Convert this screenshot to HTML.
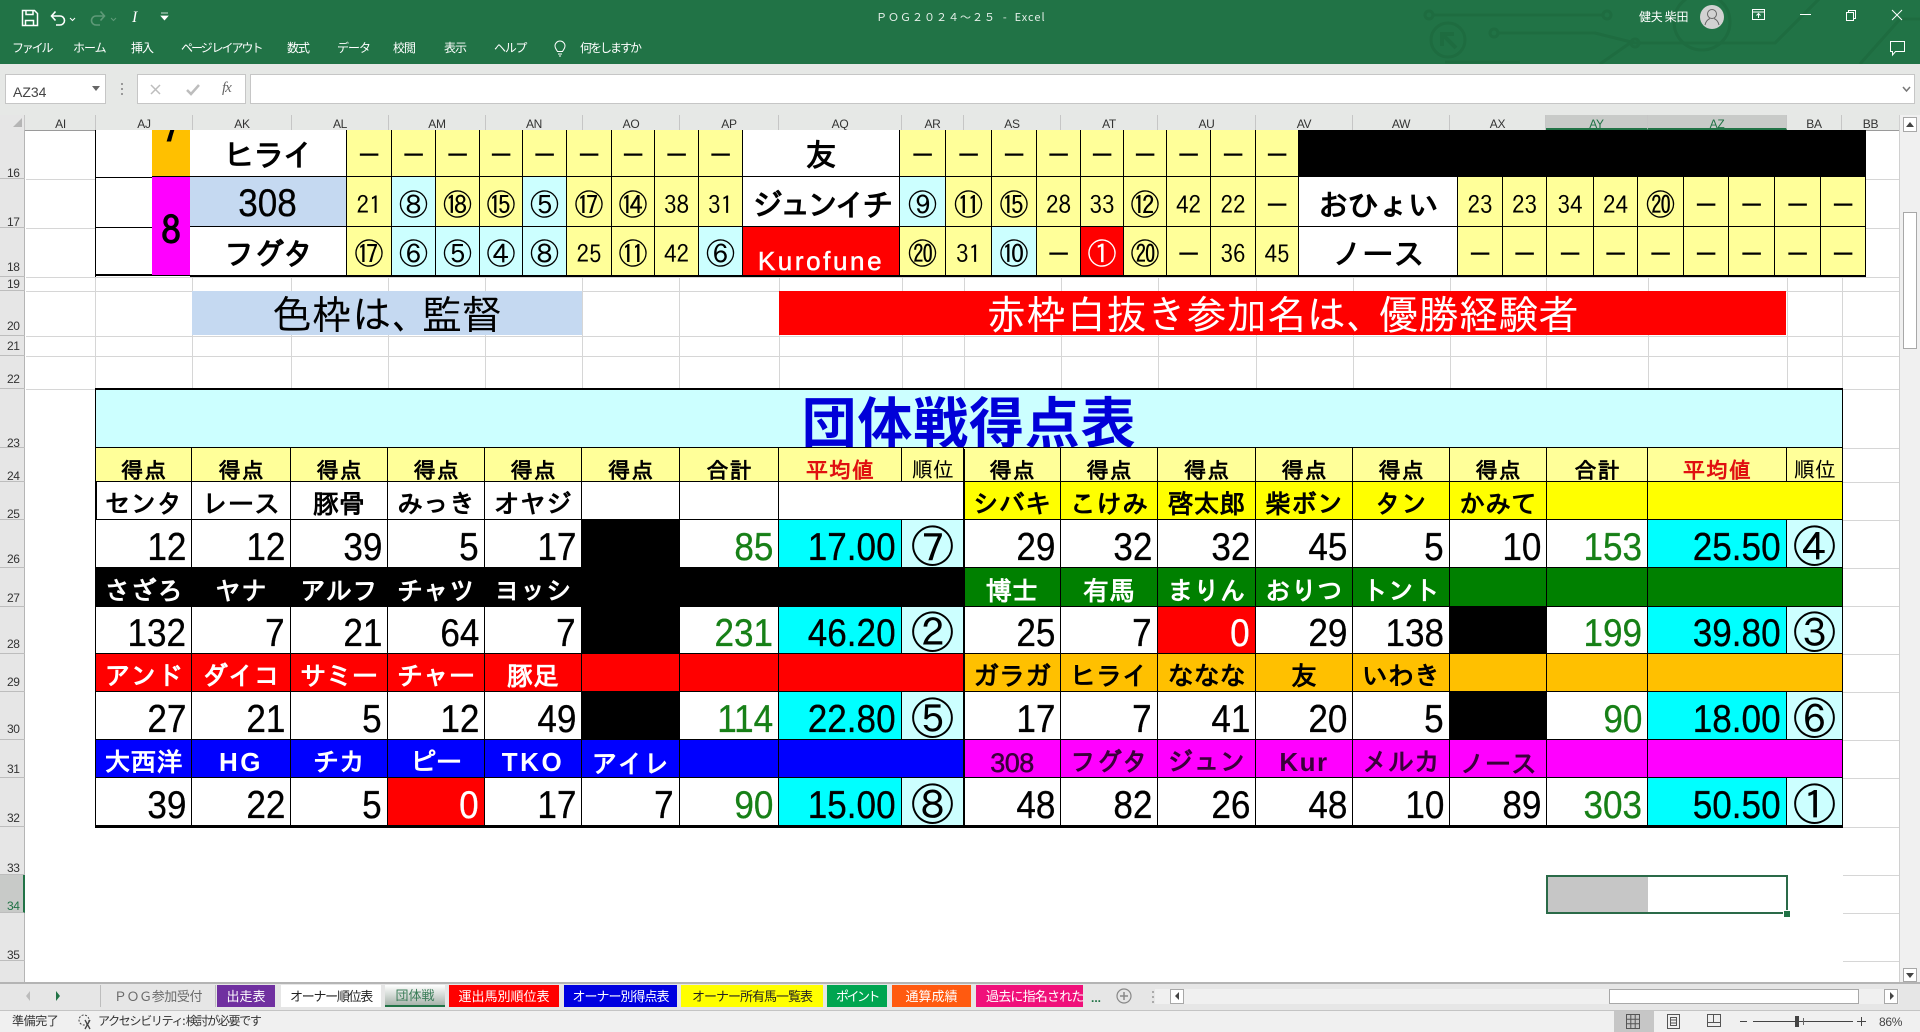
<!DOCTYPE html>
<html lang="ja"><head><meta charset="utf-8"><title>POG</title>
<style>
html,body{margin:0;padding:0;width:1920px;height:1032px;overflow:hidden;background:#fff}
body{position:relative;font-family:"Liberation Sans","Noto Sans CJK JP",sans-serif;color:#000}
.a{position:absolute}
.rb{position:absolute;top:40px;font:12px/16px "Noto Sans CJK JP",sans-serif;color:#fff;letter-spacing:-1px;white-space:nowrap}
.ch{position:absolute;top:115px;height:15px;font:12px/19px "Liberation Sans",sans-serif;color:#333;text-align:center;border-right:1px solid #c6c6c6;box-sizing:border-box;letter-spacing:-.3px;overflow:hidden}
.rh{position:absolute;left:0;width:25px;box-sizing:border-box;border-bottom:1px solid #bdbdbd;font:12px/14px "Liberation Sans",sans-serif;color:#333;letter-spacing:-.4px;display:flex;align-items:flex-end;padding:0 0 2px 7px}
.rh span{position:relative}
.g{position:absolute;display:grid}
.g>div{box-sizing:border-box;border-right:1px solid #000;border-bottom:1px solid #000;display:flex;align-items:flex-end;justify-content:center;overflow:hidden;white-space:nowrap;min-width:0;min-height:0;font-family:"IPAGothic","Noto Sans CJK JP",sans-serif}
#t1{left:190px;top:130px;grid-template-columns:157px 45px 44px 44px 43px 44px 45px 43px 44px 44px 157px 46px 46px 45px 44px 43px 43px 44px 45px 43px 159px 45px 44px 47px 44px 46px 45px 46px 46px 45px;grid-template-rows:47px 50px 49px;border-bottom:1px solid #000}
#t1>div{font-size:25px;line-height:26px;padding-bottom:7px;background:#FFFF99}
#t1>.d{font-size:27px;padding-bottom:7px}
#t1>.nm{background:#fff;font-size:31px;font-weight:bold;line-height:36px;padding-bottom:3px}
#t1>.c{font-size:29px;padding-bottom:8px}
#t1>.b{background:#CCFFFF}
#t1>.bk{background:#000}
#t2{left:96px;top:390px;grid-template-columns:96px 99px 97px 97px 97px 98px 99px 123px 62px 97px 97px 98px 97px 97px 97px 101px 139px 56px;grid-template-rows:58px 34px 38px 48px 39px 47px 38px 48px 38px 48px}
#t2>.ti{grid-column:1/-1;background:#CCFFFF;font-size:55px;font-weight:bold;color:#0000D8;line-height:56px;letter-spacing:.8px;font-family:"Noto Sans CJK JP",sans-serif}
#t2>.h{background:#FFFF99;font-size:22px;font-weight:bold;line-height:22px;padding:0 0 0 1px;letter-spacing:1px}
#t2>.h.r{color:#E01010}
#t2>.h.j{font-weight:normal;font-size:21px;letter-spacing:0}
#t2>.n{font-size:26px;font-weight:bold;line-height:30px}
#t2>.w{color:#fff}
#t2>.v{font:39px/38px "Liberation Sans",sans-serif;justify-content:flex-end;padding:0 5px 0 0;background:#fff}
#t2>.v b,.sq{font-weight:normal;display:inline-block;transform:scaleX(.9);transform-origin:100% 50%;-webkit-text-stroke:.3px currentColor}
#t2>.s{color:#178017;background:#fff}
#t2>.m{background:#00FFFF}
#t2>.o{justify-content:center;background:#CCFFFF;padding:0;font:43px/41px "IPAGothic",sans-serif}
.K{background:#000!important}.Y{background:#FFFF00}.G{background:#008000}.R{background:#FF0000}.O{background:#FFC000}.B{background:#0000FF}.M{background:#FF00FF}
.mc{color:#3a003a}
#t2>.lat{font-family:"Liberation Sans",sans-serif;letter-spacing:1.5px}
.tb{position:absolute;top:985px;height:22px;font:13px/22px "Noto Sans CJK JP",sans-serif;text-align:center;color:#fff;overflow:hidden;white-space:nowrap}
.st{position:absolute;top:1013px;font:12px/16px "Noto Sans CJK JP",sans-serif;color:#333;white-space:nowrap}
</style></head><body>

<!-- Title / ribbon -->
<div class="a" style="left:0;top:0;width:1920px;height:64px;background:#217346"></div>
<svg class="a" style="left:1400px;top:0" width="520" height="64" viewBox="0 0 520 64" fill="none" stroke="#1e6c40" stroke-width="3">
<path d="M33 15H204"/><circle cx="29" cy="15" r="4"/><circle cx="207" cy="15" r="4"/>
<circle cx="48" cy="40" r="17"/><path d="M42 46V34h12M42 34l14 14" stroke-width="4"/>
<path d="M98 33H195l40 10H375l50-50"/><circle cx="94" cy="33" r="4"/><circle cx="235" cy="43" r="4"/>
<circle cx="302" cy="22" r="28"/><path d="M200 64l30-21M45 62H120M460 64l40-45H520"/>
</svg>
<svg class="a" style="left:20px;top:9px" width="20" height="18" viewBox="0 0 20 18" fill="none" stroke="#fff" stroke-width="1.5"><path d="M2.500 1.500h12l3 3v12h-15z"/><path d="M6 1.500v4h7v-4M5.500 16.500v-5h8v5"/></svg>
<svg class="a" style="left:49px;top:9px" width="30" height="18" viewBox="0 0 30 18" fill="none" stroke="#fff" stroke-width="1.6"><path d="M3 7h8a4.500 4.500 0 0 1 0 9H7M6.500 2.500L2.500 7l4 4.500"/><path d="M21 9l2.500 2.500L26 9" stroke-width="1"/></svg>
<svg class="a" style="left:89px;top:9px" width="30" height="18" viewBox="0 0 30 18" fill="none" stroke="#5f9a78" stroke-width="1.6"><path d="M15 7H7a4.500 4.500 0 0 0 0 9h4M11.500 2.500l4 4.500-4 4.500"/><path d="M22 9l2.500 2.500L27 9" stroke-width="1"/></svg>
<div class="a" style="left:132px;top:8px;font:italic 16px/20px 'Liberation Serif',serif;color:#fff">I</div>
<svg class="a" style="left:160px;top:12px" width="10" height="10"><path d="M1 1h7M1 4h7l-3.500 4z" fill="#fff" stroke="#fff" stroke-width=".7"/></svg>
<div class="a" style="left:876px;top:9px;font:11px/16px 'Noto Sans CJK JP',sans-serif;color:#e4efe8;letter-spacing:1px;white-space:nowrap">ＰＯＧ２０２４～２５&nbsp; - &nbsp;Excel</div>
<div class="a" style="left:1639px;top:9px;font:12px/16px 'Noto Sans CJK JP',sans-serif;color:#fff;letter-spacing:-.3px;white-space:nowrap">健夫 柴田</div>
<svg class="a" style="left:1700px;top:5px" width="24" height="24" viewBox="0 0 24 24" fill="none"><circle cx="12" cy="12" r="12" fill="#d2d2d2"/><circle cx="12" cy="9" r="4.500" stroke="#666"/><path d="M5 20c1-5 4-6 5-6.500M19 20c-1-5-4-6-5-6.500" stroke="#666"/></svg>
<svg class="a" style="left:1751px;top:8px" width="16" height="14" fill="none" stroke="#fff"><rect x="1.500" y="1.500" width="12" height="10"/><path d="M1.500 4h12M7.500 10V5.500M5.500 7.500l2-2 2 2"/></svg>
<div class="a" style="left:1800px;top:14px;width:11px;height:1px;background:#fff"></div>
<svg class="a" style="left:1845px;top:9px" width="13" height="13" fill="none" stroke="#fff"><rect x="1.500" y="3.500" width="7" height="8"/><path d="M3.500 3.500v-2h7v8h-2"/></svg>
<svg class="a" style="left:1891px;top:9px" width="12" height="12" stroke="#fff"><path d="M1 1l10 10M11 1L1 11"/></svg>
<svg class="a" style="left:1889px;top:40px" width="17" height="17" fill="none" stroke="#fff"><path d="M1.500 1.500h14v10H6.500l-3 3.500v-3.500h-2z"/></svg>

<div class="rb" style="left:12px;letter-spacing:-2.200px">ファイル</div>
<div class="rb" style="left:73px">ホーム</div>
<div class="rb" style="left:131px">挿入</div>
<div class="rb" style="left:181px;letter-spacing:-2px">ページ レイアウト</div>
<div class="rb" style="left:287px">数式</div>
<div class="rb" style="left:337px">データ</div>
<div class="rb" style="left:393px">校閲</div>
<div class="rb" style="left:444px">表示</div>
<div class="rb" style="left:494px;letter-spacing:-1.300px">ヘルプ</div>
<svg class="a" style="left:553px;top:40px" width="14" height="17" fill="none" stroke="#fff"><path d="M4.500 11.500C3.500 9.500 2 8.500 2 6a5 5 0 0 1 10 0c0 2.500-1.500 3.500-2.500 5.500zM5 14h4M6 16h2"/></svg>
<div class="rb" style="left:580px;letter-spacing:-2px">何をしますか</div>

<!-- Formula bar -->
<div class="a" style="left:0;top:64px;width:1920px;height:66px;background:#e6e8e6"></div>
<div class="a" style="left:5px;top:74px;width:101px;height:30px;background:#fff;border:1px solid #c6c6c6;box-sizing:border-box;font:14px/34px 'Liberation Sans',sans-serif;color:#444;padding-left:7px">AZ34</div>
<svg class="a" style="left:92px;top:86px" width="9" height="6"><path d="M0 0h8L4 5z" fill="#666"/></svg>
<div class="a" style="left:121px;top:83px;width:2px;height:2px;background:#999;box-shadow:0 5px #999,0 10px #999"></div>
<div class="a" style="left:137px;top:74px;width:109px;height:30px;background:#fff;border:1px solid #c6c6c6;box-sizing:border-box"></div>
<svg class="a" style="left:149px;top:83px" width="70" height="14" fill="none" stroke="#bdbdbd" stroke-width="1.500"><path d="M2 2l9 9M11 2l-9 9"/><path d="M38 7l4 4 8-9" stroke-width="2.500"/></svg>
<div class="a" style="left:222px;top:79px;font:italic 15px/18px 'Liberation Serif',serif;color:#666;letter-spacing:-1px">fx</div>
<div class="a" style="left:250px;top:74px;width:1665px;height:30px;background:#fff;border:1px solid #c6c6c6;box-sizing:border-box"></div>
<svg class="a" style="left:1902px;top:86px" width="9" height="7" fill="none" stroke="#777" stroke-width="1.500"><path d="M1 1l3.500 4L8 1"/></svg>

<!-- Column header -->
<div class="a" style="left:0;top:115px;width:25px;height:15px;background:#e6e6e6;border-right:1px solid #c6c6c6;box-sizing:border-box"></div>
<svg class="a" style="left:13px;top:118px" width="10" height="10"><path d="M9 0v9H0z" fill="#b5b5b5"/></svg>
<div class="a" style="left:0;top:130px;width:1899px;height:1px;background:#9a9a9a"></div>
<div class="ch" style="left:26px;width:70px">AI</div>
<div class="ch" style="left:96px;width:97px">AJ</div>
<div class="ch" style="left:193px;width:99px">AK</div>
<div class="ch" style="left:292px;width:97px">AL</div>
<div class="ch" style="left:389px;width:97px">AM</div>
<div class="ch" style="left:486px;width:97px">AN</div>
<div class="ch" style="left:583px;width:97px">AO</div>
<div class="ch" style="left:680px;width:99px">AP</div>
<div class="ch" style="left:779px;width:123px">AQ</div>
<div class="ch" style="left:902px;width:62px">AR</div>
<div class="ch" style="left:964px;width:97px">AS</div>
<div class="ch" style="left:1061px;width:97px">AT</div>
<div class="ch" style="left:1158px;width:98px">AU</div>
<div class="ch" style="left:1256px;width:97px">AV</div>
<div class="ch" style="left:1353px;width:97px">AW</div>
<div class="ch" style="left:1450px;width:96px">AX</div>
<div class="ch" style="left:1546px;width:102px;background:#c8cac8;color:#217346;border-bottom:2px solid #217346">AY</div>
<div class="ch" style="left:1648px;width:139px;background:#c8cac8;color:#217346;border-bottom:2px solid #217346">AZ</div>
<div class="ch" style="left:1787px;width:55px">BA</div>
<div class="ch" style="left:1842px;width:57px;border-right:0">BB</div>

<!-- Row header -->
<div class="a" style="left:0;top:130px;width:25px;height:852px;background:#e6e6e6;border-right:1px solid #b5b5b5;box-sizing:border-box"></div>
<div class="rh" style="top:130px;height:49px"><span style="top:4px">16</span></div>
<div class="rh" style="top:179px;height:49px"><span style="top:4px">17</span></div>
<div class="rh" style="top:228px;height:49px"><span style="top:0">18</span></div>
<div class="rh" style="top:277px;height:14px;padding-bottom:0"><span style="top:1px">19</span></div>
<div class="rh" style="top:291px;height:45px">20</div>
<div class="rh" style="top:336px;height:20px;padding-bottom:1px"><span style="top:-1px">21</span></div>
<div class="rh" style="top:356px;height:33px">22</div>
<div class="rh" style="top:389px;height:59px"><span style="top:5px">23</span></div>
<div class="rh" style="top:448px;height:34px"><span style="top:4px">24</span></div>
<div class="rh" style="top:482px;height:38px"><span style="top:4px">25</span></div>
<div class="rh" style="top:520px;height:48px"><span style="top:1px">26</span></div>
<div class="rh" style="top:568px;height:39px"><span style="top:1px">27</span></div>
<div class="rh" style="top:607px;height:47px">28</div>
<div class="rh" style="top:654px;height:38px">29</div>
<div class="rh" style="top:692px;height:48px"><span style="top:-1px">30</span></div>
<div class="rh" style="top:740px;height:38px"><span style="top:1px">31</span></div>
<div class="rh" style="top:778px;height:49px"><span style="top:1px">32</span></div>
<div class="rh" style="top:827px;height:48px"><span style="top:3px">33</span></div>
<div class="rh" style="top:875px;height:38px;background:#c8cac8;color:#217346;border-right:2px solid #217346"><span style="top:3px">34</span></div>
<div class="rh" style="top:913px;height:48px"><span style="top:4px">35</span></div>

<!-- Gridlines -->
<svg class="a" style="left:26px;top:130px" width="1873" height="852" stroke="#d6d6d6" shape-rendering="crispEdges" fill="none">
<path d="M0 49.500H70M0 98.500H70M0 147.500H1873M0 161.500H1873M0 206.500H1873M0 226.500H1873M0 259.500H1873"/>
<path d="M1816 49.500H1873M1816 98.500H1873"/>
<path d="M69.500 0V260M166.500 147V260M265.500 147V260M362.500 147V260M459.500 147V260M556.500 147V260M653.500 147V260M753.500 147V260M876.500 147V260M938.500 147V260M1035.500 147V260M1132.500 147V260M1230.500 147V260M1327.500 147V260M1424.500 147V260M1520.500 147V260M1622.500 147V260M1761.500 147V260M1816.500 147V260"/>
<path d="M1817 318.500H1873M1817 352.500H1873M1817 390.500H1873M1817 438.500H1873M1817 476.500H1873M1817 524.500H1873M1817 562.500H1873M1817 610.500H1873M1817 648.500H1873M1817 697.500H1873M1817 745.500H1873M1817 783.500H1873M1817 831.500H1873"/>
</svg>

<!-- Left part of upper table -->
<div class="a" style="left:95px;top:130px;width:57px;height:147px;background:#fff;border-left:1.500px solid #000;box-sizing:border-box">
 <div class="a" style="left:0;top:47px;width:57px;height:1px;background:#000"></div>
 <div class="a" style="left:0;top:97px;width:57px;height:1px;background:#000"></div>
 <div class="a" style="left:0;top:144px;width:57px;height:2px;background:#000"></div>
</div>
<div class="a" style="left:152px;top:130px;width:38px;height:47px;background:#FFC000;border-bottom:1px solid #000;box-sizing:border-box;overflow:hidden;text-align:center">
 <div style="margin-top:-18px;font:bold 36px/36px 'IPAGothic',sans-serif">7</div></div>
<div class="a" style="left:152px;top:177px;width:38px;height:99px;background:#FF00FF;border-bottom:1px solid #000;box-sizing:border-box;text-align:center;font:bold 38px/106px 'IPAGothic',sans-serif">8</div>

<!-- Upper table -->
<div class="g" id="t1">
<div class="nm" style="letter-spacing:-1.500px">ヒライ</div><div class="d">－</div><div class="d">－</div><div class="d">－</div><div class="d">－</div><div class="d">－</div><div class="d">－</div><div class="d">－</div><div class="d">－</div><div class="d">－</div>
<div class="nm">友</div><div class="d">－</div><div class="d">－</div><div class="d">－</div><div class="d">－</div><div class="d">－</div><div class="d">－</div><div class="d">－</div><div class="d">－</div><div class="d">－</div>
<div class="bk" style="grid-column:span 10"></div>

<div class="nm" style="background:#C5D9F1;font:39px/36px 'Liberation Sans',sans-serif;padding-bottom:4px"><span class="sq" style="transform-origin:50% 50%">308</span></div><div>21</div><div class="c b">⑧</div><div class="c">⑱</div><div class="c">⑮</div><div class="c b">⑤</div><div class="c">⑰</div><div class="c">⑭</div><div>38</div><div>31</div>
<div class="nm" style="letter-spacing:-3.500px">ジュンイチ</div><div class="c b">⑨</div><div class="c">⑪</div><div class="c">⑮</div><div>28</div><div>33</div><div class="c">⑫</div><div>42</div><div>22</div><div class="d">－</div>
<div class="nm" style="letter-spacing:-1px">おひょい</div><div>23</div><div>23</div><div>34</div><div>24</div><div class="c">⑳</div><div class="d">－</div><div class="d">－</div><div class="d">－</div><div class="d">－</div>

<div class="nm" style="letter-spacing:-1.500px">フグタ</div><div class="c">⑰</div><div class="c b">⑥</div><div class="c b">⑤</div><div class="c b">④</div><div class="c b">⑧</div><div>25</div><div class="c">⑪</div><div>42</div><div class="c b">⑥</div>
<div class="nm" style="background:#FF0000;color:#fff;font:26px/28px 'Liberation Sans',sans-serif;padding-bottom:0;letter-spacing:2.600px;-webkit-text-stroke:.5px #fff">Kurofune</div><div class="c">⑳</div><div>31</div><div class="c b">⑩</div><div class="d">－</div><div class="c" style="color:#fff;background:#FF0000">①</div><div class="c">⑳</div><div class="d">－</div><div>36</div><div>45</div>
<div class="nm">ノース</div><div class="d">－</div><div class="d">－</div><div class="d">－</div><div class="d">－</div><div class="d">－</div><div class="d">－</div><div class="d">－</div><div class="d">－</div><div class="d">－</div>
</div>

<!-- Notes -->
<div class="a" style="left:192px;top:291px;width:390px;height:44px;background:#C5D9F1;text-align:center;font:40px/46px 'IPAGothic',sans-serif;white-space:nowrap">色枠は<span style="letter-spacing:-10px">、</span>監督</div>
<div class="a" style="left:779px;top:291px;width:1007px;height:44px;background:#FF0000;text-align:center;color:#fff;font:40px/46px 'IPAGothic',sans-serif;white-space:nowrap">赤枠白抜き参加名は<span style="letter-spacing:-8px">、</span>優勝経験者</div>

<!-- Team table -->
<div class="a" style="left:95px;top:388px;width:1748px;height:440px;border:2px solid #000;box-sizing:border-box"></div>
<div class="g" id="t2">
<div class="ti">団体戦得点表</div>

<div class="h">得点</div><div class="h">得点</div><div class="h">得点</div><div class="h">得点</div><div class="h">得点</div><div class="h">得点</div><div class="h">合計</div><div class="h r">平均値</div><div class="h j">順位</div>
<div class="h">得点</div><div class="h">得点</div><div class="h">得点</div><div class="h">得点</div><div class="h">得点</div><div class="h">得点</div><div class="h">合計</div><div class="h r">平均値</div><div class="h j">順位</div>

<div class="n">センタ</div><div class="n">レース</div><div class="n">豚骨</div><div class="n">みっき</div><div class="n">オヤジ</div><div class="n"></div><div class="n"></div><div class="n" style="grid-column:span 2"></div>
<div class="n Y">シバキ</div><div class="n Y">こけみ</div><div class="n Y">啓太郎</div><div class="n Y">柴ボン</div><div class="n Y">タン</div><div class="n Y">かみて</div><div class="n Y"></div><div class="n Y" style="grid-column:span 2"></div>

<div class="v"><b>12</b></div><div class="v"><b>12</b></div><div class="v"><b>39</b></div><div class="v"><b>5</b></div><div class="v"><b>17</b></div><div class="K"></div><div class="v s"><b>85</b></div><div class="v m"><b>17.00</b></div><div class="v o">⑦</div>
<div class="v"><b>29</b></div><div class="v"><b>32</b></div><div class="v"><b>32</b></div><div class="v"><b>45</b></div><div class="v"><b>5</b></div><div class="v"><b>10</b></div><div class="v s"><b>153</b></div><div class="v m"><b>25.50</b></div><div class="v o">④</div>

<div class="n w K">さざろ</div><div class="n w K">ヤナ</div><div class="n w K">アルフ</div><div class="n w K">チャツ</div><div class="n w K">ヨッシ</div><div class="K"></div><div class="K"></div><div class="K" style="grid-column:span 2"></div>
<div class="n w G">博士</div><div class="n w G">有馬</div><div class="n w G">まりん</div><div class="n w G">おりつ</div><div class="n w G">トント</div><div class="G"></div><div class="G"></div><div class="G" style="grid-column:span 2"></div>

<div class="v"><b>132</b></div><div class="v"><b>7</b></div><div class="v"><b>21</b></div><div class="v"><b>64</b></div><div class="v"><b>7</b></div><div class="K"></div><div class="v s"><b>231</b></div><div class="v m"><b>46.20</b></div><div class="v o">②</div>
<div class="v"><b>25</b></div><div class="v"><b>7</b></div><div class="v" style="background:#FF0000;color:#fff"><b>0</b></div><div class="v"><b>29</b></div><div class="v"><b>138</b></div><div class="K"></div><div class="v s"><b>199</b></div><div class="v m"><b>39.80</b></div><div class="v o">③</div>

<div class="n w R">アンド</div><div class="n w R">ダイコ</div><div class="n w R">サミー</div><div class="n w R">チャー</div><div class="n w R">豚足</div><div class="R"></div><div class="R"></div><div class="R" style="grid-column:span 2"></div>
<div class="n O">ガラガ</div><div class="n O">ヒライ</div><div class="n O">ななな</div><div class="n O">友</div><div class="n O">いわき</div><div class="O"></div><div class="O"></div><div class="O" style="grid-column:span 2"></div>

<div class="v"><b>27</b></div><div class="v"><b>21</b></div><div class="v"><b>5</b></div><div class="v"><b>12</b></div><div class="v"><b>49</b></div><div class="K"></div><div class="v s"><b>114</b></div><div class="v m"><b>22.80</b></div><div class="v o">⑤</div>
<div class="v"><b>17</b></div><div class="v"><b>7</b></div><div class="v"><b>41</b></div><div class="v"><b>20</b></div><div class="v"><b>5</b></div><div class="K"></div><div class="v s"><b>90</b></div><div class="v m"><b>18.00</b></div><div class="v o">⑥</div>

<div class="n w B">大西洋</div><div class="n w B lat" style="letter-spacing:2.500px">HG</div><div class="n w B">チカ</div><div class="n w B">ピー</div><div class="n w B lat" style="letter-spacing:2.500px">TKO</div><div class="n w B" style="line-height:25px">アイレ</div><div class="B"></div><div class="B" style="grid-column:span 2"></div>
<div class="n M mc lat" style="font-size:27px;font-weight:normal;letter-spacing:-.5px;line-height:28px;-webkit-text-stroke:.5px #3a003a">308</div><div class="n M mc">フグタ</div><div class="n M mc">ジュン</div><div class="n M mc lat">Kur</div><div class="n M mc">メルカ</div><div class="n M mc" style="line-height:25px">ノース</div><div class="M"></div><div class="M" style="grid-column:span 2"></div>

<div class="v"><b>39</b></div><div class="v"><b>22</b></div><div class="v"><b>5</b></div><div class="v" style="background:#FF0000;color:#fff"><b>0</b></div><div class="v"><b>17</b></div><div class="v"><b>7</b></div><div class="v s"><b>90</b></div><div class="v m"><b>15.00</b></div><div class="v o">⑧</div>
<div class="v"><b>48</b></div><div class="v"><b>82</b></div><div class="v"><b>26</b></div><div class="v"><b>48</b></div><div class="v"><b>10</b></div><div class="v"><b>89</b></div><div class="v s"><b>303</b></div><div class="v m"><b>50.50</b></div><div class="v o">①</div>
</div>
<div class="a" style="left:964px;top:449px;width:1px;height:378px;background:#000"></div>

<!-- Selection -->
<div class="a" style="left:1546px;top:875px;width:242px;height:39px;border:2px solid #2a6a48;box-sizing:border-box"></div>
<div class="a" style="left:1548px;top:877px;width:100px;height:35px;background:#c6c6c6"></div>
<div class="a" style="left:1784px;top:911px;width:6px;height:6px;background:#217346;border:1px solid #fff;box-sizing:content-box;margin:-1px"></div>

<!-- Vertical scrollbar -->
<div class="a" style="left:1899px;top:115px;width:21px;height:867px;background:#f0f0f0;border-left:1px solid #d0d0d0;box-sizing:border-box"></div>
<div class="a" style="left:1903px;top:117px;width:14px;height:15px;background:#fff;border:1px solid #a8a8a8;box-sizing:border-box"></div>
<svg class="a" style="left:1906px;top:121px" width="9" height="7"><path d="M0 6h8L4 1z" fill="#444"/></svg>
<div class="a" style="left:1903px;top:212px;width:14px;height:137px;background:#fff;border:1px solid #a8a8a8;box-sizing:border-box"></div>
<div class="a" style="left:1903px;top:968px;width:14px;height:14px;background:#fff;border:1px solid #a8a8a8;box-sizing:border-box"></div>
<svg class="a" style="left:1906px;top:972px" width="9" height="7"><path d="M0 1h8L4 6z" fill="#444"/></svg>

<!-- Sheet tabs -->
<div class="a" style="left:0;top:982px;width:1920px;height:28px;background:#e6e6e6;border-top:2px solid #b4b4b4;box-sizing:border-box"></div>
<svg class="a" style="left:24px;top:990px" width="40" height="12"><path d="M6 1L2 6l4 5z" fill="#bcbcbc"/><path d="M32 1l4 5-4 5z" fill="#217346"/></svg>
<div class="a" style="left:100px;top:985px;width:1px;height:22px;background:#bdbdbd"></div>
<div class="tb" style="left:101px;width:114px;color:#6b6b6b;letter-spacing:-.4px">ＰＯＧ参加受付</div>
<div class="a" style="left:215px;top:985px;width:1px;height:22px;background:#bdbdbd"></div>
<div class="tb" style="left:217px;width:58px;background:#7030A0">出走表</div>
<div class="tb" style="left:281px;width:100px;background:#fff;color:#222;letter-spacing:-1.300px">オーナー順位表</div>
<div class="tb" style="left:385px;width:60px;height:20px;line-height:20px;background:linear-gradient(#fff,#a8b4ac);color:#3b7d58;border-bottom:2px solid #217346">団体戦</div>
<div class="tb" style="left:449px;width:110px;background:#FF0000">運出馬別順位表</div>
<div class="tb" style="left:564px;width:113px;background:#0000E0;letter-spacing:-1px">オーナー別得点表</div>
<div class="tb" style="left:681px;width:142px;background:#FFFF00;color:#222;letter-spacing:-1px">オーナー所有馬一覧表</div>
<div class="tb" style="left:827px;width:60px;background:#00A550;letter-spacing:-2.500px">ポイント</div>
<div class="tb" style="left:892px;width:79px;background:#FF5A10">通算成績</div>
<div class="tb" style="left:976px;width:107px;background:#F0107A;text-align:left;padding-left:10px;box-sizing:border-box;letter-spacing:-.8px">過去に指名された名</div>
<div class="a" style="left:1091px;top:990px;font:bold 12px/16px 'Liberation Sans',sans-serif;color:#217346">...</div>
<svg class="a" style="left:1116px;top:988px" width="16" height="16" fill="none" stroke="#888" stroke-width="1.200"><circle cx="8" cy="8" r="7"/><path d="M8 4v8M4 8h8" stroke-width="1.500"/></svg>
<div class="a" style="left:1152px;top:991px;width:2px;height:2px;background:#aaa;box-shadow:0 5px #aaa,0 10px #aaa"></div>
<!-- H scrollbar -->
<div class="a" style="left:1155px;top:989px;width:744px;height:15px;background:#f0f0f0"></div>
<div class="a" style="left:1170px;top:989px;width:14px;height:15px;background:#fff;border:1px solid #a8a8a8;box-sizing:border-box"></div>
<svg class="a" style="left:1174px;top:992px" width="6" height="9"><path d="M5 0v8L1 4z" fill="#444"/></svg>
<div class="a" style="left:1609px;top:989px;width:250px;height:15px;background:#fff;border:1px solid #a8a8a8;box-sizing:border-box"></div>
<div class="a" style="left:1884px;top:989px;width:14px;height:15px;background:#fff;border:1px solid #a8a8a8;box-sizing:border-box"></div>
<svg class="a" style="left:1889px;top:992px" width="6" height="9"><path d="M1 0v8l4-4z" fill="#444"/></svg>

<!-- Status bar -->
<div class="a" style="left:0;top:1010px;width:1920px;height:22px;background:#f0f0f0;border-top:1px solid #c4c4c4;box-sizing:border-box"></div>
<div class="st" style="left:12px;letter-spacing:-.4px">準備完了</div>
<svg class="a" style="left:77px;top:1014px" width="17" height="16" fill="none" stroke="#444"><circle cx="7" cy="6" r="5" stroke-dasharray="2 1.500"/><path d="M8 6l5 9M13 6l-5 9" stroke-width="1.300"/></svg>
<div class="st" style="left:98px;letter-spacing:-1.300px">アクセシビリティ: 検討が必要です</div>
<div class="a" style="left:1614px;top:1011px;width:40px;height:21px;background:#c6c6c6"></div>
<svg class="a" style="left:1626px;top:1014px" width="14" height="15" fill="none" stroke="#555"><path d="M.5.500h13v14H.5zM.5 5.200h13M.5 9.800h13M4.800.500v14M9.200.500v14"/></svg>
<svg class="a" style="left:1667px;top:1014px" width="14" height="15" fill="none" stroke="#555"><path d="M.5.500h12v14H.5zM3.500 3.500h6v8h-6zM3.500 6h6M3.500 9h6"/></svg>
<svg class="a" style="left:1707px;top:1014px" width="14" height="15" fill="none" stroke="#555"><path d="M.5.500h13v12H.5zM.5 8.500h13M6.500.500v8"/></svg>
<div class="a" style="left:1740px;top:1021px;width:7px;height:1px;background:#444"></div>
<div class="a" style="left:1753px;top:1021px;width:100px;height:1px;background:#444"></div>
<div class="a" style="left:1795px;top:1016px;width:4px;height:11px;background:#444"></div>
<div class="a" style="left:1803px;top:1018px;width:1px;height:7px;background:#666"></div>
<div class="a" style="left:1857px;top:1021px;width:9px;height:1px;background:#444"></div>
<div class="a" style="left:1861px;top:1017px;width:1px;height:9px;background:#444"></div>
<div class="a" style="left:1879px;top:1014px;font:12px/16px 'Liberation Sans',sans-serif;color:#444;letter-spacing:-.3px">86%</div>
</body></html>
